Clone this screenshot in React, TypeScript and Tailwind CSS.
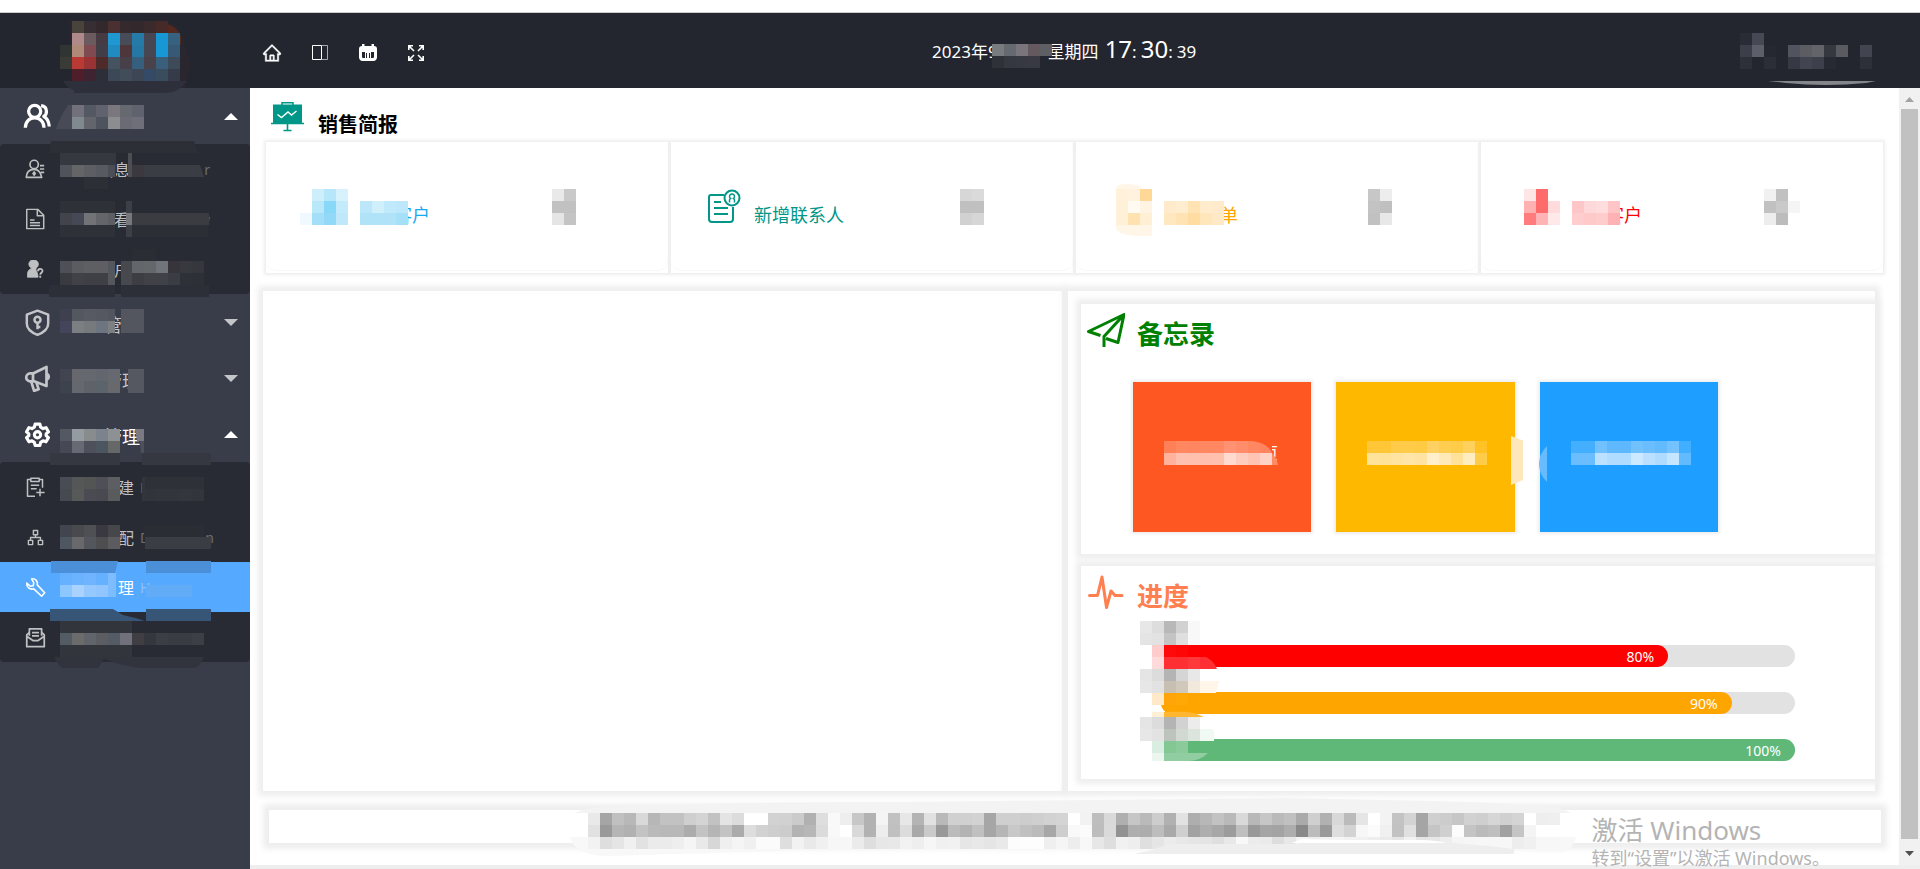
import type { ReactNode } from 'react'
import { AiOutlineHome } from 'react-icons/ai'

const CELL = 12

// two digit tokens are greys, six digit tokens are full colours, "." is empty
function Patch({ x = 0, y = 0, rows }: { x?: number; y?: number; rows: string[] }) {
  return (
    <g shapeRendering="crispEdges">
      {rows.flatMap((row, r) =>
        row.split(' ').map((c, i) =>
          c === '.' ? null : (
            <rect
              key={`${r}-${i}`}
              x={x + i * CELL}
              y={y + r * CELL}
              width={CELL}
              height={CELL}
              fill={`#${c.length === 2 ? c + c + c : c}`}
            />
          )
        )
      )}
    </g>
  )
}

function Mosaic({ rows, className = '', children }: { rows: string[]; className?: string; children?: ReactNode }) {
  const width = Math.max(...rows.map((r) => r.split(' ').length)) * CELL
  return (
    <svg width={width} height={rows.length * CELL} className={`block shrink-0 overflow-visible ${className}`} aria-hidden="true">
      <Patch rows={rows} />
      {children}
    </svg>
  )
}

interface IconProps {
  size: number
  width?: number
  children: ReactNode
}

function Icon({ size, width = 2, children }: IconProps) {
  return (
    <svg
      width={size}
      height={size}
      viewBox="0 0 24 24"
      fill="none"
      stroke="currentColor"
      strokeWidth={width}
      strokeLinejoin="round"
      className="shrink-0"
      aria-hidden="true"
    >
      {children}
    </svg>
  )
}

const icons = {
  users: (
    <Icon size={28} width={2.8}>
      <circle cx="10" cy="8" r="5.2" />
      <path d="M2 22c0-5 3.4-8.4 8-8.4s8 3.4 8 8.4" />
      <path d="M15.5 3.2c3 .4 4.6 2.4 4.6 4.9 0 1.9-.9 3.4-2.3 4.3 2.8 1.4 4.4 4.4 4.7 8.6" />
    </Icon>
  ),
  shield: (
    <Icon size={27} width={2.2}>
      <path d="M12 1.5 21.500 5v8c0 4.500-4 7.700-9.500 10C6.500 20.700 2.500 17.500 2.500 13V5z" />
      <circle cx="12" cy="9.5" r="2.7" />
      <path d="M12 12v6M12 16h2.5" />
    </Icon>
  ),
  horn: (
    <Icon size={27} width={2.4}>
      <path d="M8 7.5 20 1.700v17L9 14.500H5.500a3.500 3.500 0 0 1 0-7z" />
      <path d="M20.500 8c2 1 2 4 0 5M6.500 15l2.500 8 4-1.500-2-6M8 8v6" />
    </Icon>
  ),
  gear: (
    <Icon size={25} width={3}>
      <path d="M9.700 2h4.600l.7 3 2.300 1.300 2.900-.9 2.300 4L20.300 11.500v1.500l2.200 2-2.300 4-2.900-.9L15 19.500l-.7 3H9.700l-.7-3-2.300-1.400-2.900.9-2.300-4L3.700 13v-1.500L1.500 9.400l2.300-4 2.900.9L9 5z" />
      <circle cx="12" cy="12.2" r="3" />
    </Icon>
  ),
  person: (
    <Icon size={20} width={2}>
      <circle cx="11" cy="6.5" r="5" />
      <path d="M1.500 22c.3-6.500 4-9.500 9.500-9.500 4.500 0 7.700 2.500 9 9.500zM18 8h5M18 12h5M19 16h4" />
      <path d="m11 14 2.500 3.500L11 21l-2.500-3.500z" fill="currentColor" stroke="none" />
    </Icon>
  ),
  file: (
    <Icon size={22} width={1.6}>
      <path d="M3 1.500h12L21.500 8v14.500H3zM14.500 1.500v7h7M6.500 13h5M6.500 16h11M6.500 19h11" />
    </Icon>
  ),
  ask: (
    <Icon size={18} width={1}>
      <path
        d="M11 0a5.500 5.500 0 0 1 5.500 5.500c0 2-1 3.800-2.500 4.800-1 1.200-1 3 .5 5.200L16 21v2H2v-5c0-3 2-5.500 6-7A5.500 5.500 0 0 1 11 0z"
        fill="currentColor"
      />
      <path d="M16 15c0-4 6-4 6-.5 0 2.500-3 2.500-3 5M19 21v2.500" strokeWidth="2.4" />
    </Icon>
  ),
  clip: (
    <Icon size={20} width={1.8}>
      <path d="M12 23H3V3h4M17 3h4v10M7 1.500h10v4H7zM7 10h10M7 14h7M18 14v9M13.500 18.500h10" />
    </Icon>
  ),
  tree: (
    <Icon size={17} width={2}>
      <path d="M9 2h6v6H9zM2 16h6v6H2zM16 16h6v6h-6zM12 8v4M5 16v-4h14v4" />
    </Icon>
  ),
  wrench: (
    <Icon size={21} width={1.8}>
      <path d="M7.500 2.200c4-1 7.500 2.500 6.500 6.800l8.500 9-3.500 4-9-8.500C5.500 15 1.500 11.500 2 7l4 3.500 3.500-.5.500-3.500z" />
    </Icon>
  ),
  mail: (
    <Icon size={21} width={2}>
      <path d="M5 10V2h14v8M5 6 2 9v13.500h20V9l-3-3M2 10.500l7 5h6l7-5M8 6.500h8M8 10h8" />
    </Icon>
  ),
}

interface Sub {
  icon: ReactNode
  label: string
  indent: string
  head?: string
  tail?: string
  active?: boolean
}

interface Group {
  icon: ReactNode
  label: string
  items?: Sub[]
}

const menu: Group[] = [
  {
    icon: icons.users,
    label: '',
    items: [
      { icon: icons.person, label: '信息', indent: 'ml-[52px]', tail: 'r' },
      { icon: icons.file, label: '查看', indent: 'ml-[52px]', tail: 'w' },
      { icon: icons.ask, label: '客户', indent: 'ml-[52px]' },
    ],
  },
  { icon: icons.shield, label: '管理' },
  { icon: icons.horn, label: '管理' },
  {
    icon: icons.gear,
    label: '管理',
    items: [
      { icon: icons.clip, label: '建', indent: 'ml-[72px]', head: 'N' },
      { icon: icons.tree, label: '配', indent: 'ml-[72px]', head: 'D', tail: 'n' },
      { icon: icons.wrench, label: '理', indent: 'ml-[72px]', head: 'H', active: true },
      { icon: icons.mail, label: '', indent: 'ml-[72px]' },
    ],
  },
]

function Sidebar() {
  return (
    <nav className="w-[250px] shrink-0 bg-[#393d49]">
      {menu.map((group, i) => (
        <div key={i}>
          <button
            type="button"
            aria-label={group.label || '菜单'}
            aria-expanded={!!group.items}
            className={`flex h-14 w-full items-center pl-[23px] pr-3 text-lg ${group.items ? 'text-white' : 'text-[#c4c5c9]'}`}
          >
            <span className="flex w-7 justify-center">{group.icon}</span>
            <span className="ml-[53px] flex-1 pt-1.5 text-left">{group.label}</span>
            <svg width="14" height="7" viewBox="0 0 14 7" fill="currentColor" aria-hidden="true">
              <path d={group.items ? 'M0 7 7 0l7 7z' : 'M0 0h14L7 7z'} />
            </svg>
          </button>
          {group.items && (
            <ul className="rounded-sm bg-[#282b33]">
              {group.items.map((item, k) => (
                <li key={k}>
                  <a
                    href="#"
                    aria-label={item.label || '邮件'}
                    className={`flex h-[50px] items-center pl-6 text-base ${
                      item.active ? 'bg-[#55aaff] text-white' : 'text-[#bfc0c2]'
                    }`}
                  >
                    <span className="flex w-[22px] justify-center">{item.icon}</span>
                    <span className={`pt-0.5 ${item.indent}`}>{item.label}</span>
                    <span className={`ml-1.5 flex w-[74px] justify-between pt-0.5 text-sm ${item.active ? 'text-[#8fc2f5]' : 'text-[#6b6d73]'}`}>
                      <span>{item.head}</span>
                      <span>{item.tail}</span>
                    </span>
                  </a>
                </li>
              ))}
            </ul>
          )}
        </div>
      ))}
    </nav>
  )
}

// pixelated areas over the logo and the menu labels
function MenuMask() {
  return (
    <svg className="pointer-events-none absolute left-0 top-0" width="250" height="680" aria-hidden="true">
      <path d="M69 20q8 0 16 4l85 0q8-1 11 10l10 30-6 24H72z" fill="#2a2630" />
      <path d="M160 24q14-2 21 12v9l-13-12z" fill="#52281f" />
      <Patch
        x={60}
        y={21}
        rows={[
          '. 48443c 372e33 33292d 4a3030 35292d 33292d 3a2a2c 452a28',
          '. b08a8b 6b5b5e 463b43 1f97d0 484c58 257aa8 464753 1797d3 37627f',
          '2f3533 b08a78 7f4b50 423e47 1f8bc0 4f363b 2678a4 464753 1797d3 365a75',
          '3a3a36 b93a32 9a3333 4f2a2a 455260 484048 355f7c 4a424a 3a5f7a 3d4a58',
          '. 4e1f2a 3e2430 2c2e38 3d4857 414d59 3d4654 354a66 3a4d5e 353b49',
        ]}
      />
      <path d="M63 81h124q-8 12-22 12H73l2-2q-8-3-12-10z" fill="#2d2f3a" />

      <path d="M56 129q4-12 12-24h4v24z" fill="#484b55" />
      <Patch x={72} y={105} rows={['72717b 545863 60636e 7b777e 666970 5f636d', '80898f 62656b 4e545e 8b8d8f 6b6b76 6f6f79']} />

      <path d="M51 141h143l4 12H49z" fill="#2d2f37" />
      <path d="M60 153h56v24H60z" fill="#36383f" />
      <path d="M84 177h24v12H84z" fill="#2d2f37" />
      <path d="M128 153h4v24h-4z" fill="#4c4e54" />
      <Patch x={60} y={165} rows={['50535a 646567 5c5e63 585a62']} />
      <path d="M108 165h7v12h-7z" fill="#4c4e57" />
      <path d="M132 165h68l4 12h-72z" fill="#3b3d44" />
      <path d="M132 165h12v12h-12z" fill="#3b393e" />

      <path d="M60 201h55v36H60z" fill="#2f3138" />
      <Patch x={60} y={213} rows={['43434c 444955 727377 646568']} />
      <path d="M108 213h7v12h-7z" fill="#5c5e63" />
      <path d="M126 201h6v36h-6z" fill="#3d3f46" />
      <path d="M126 213h6v12h-6z" fill="#77787c" />
      <path d="M132 213h77v12h-77z" fill="#3a3c42" />
      <path d="M132 225h76v12h-76z" fill="#2c2e36" />

      <path d="M132 249h24v12h-24z" fill="#2b2d35" />
      <Patch x={60} y={261} rows={['4e4f57 5b5c60 5d5f62 5f5e63', '393b41 404248 3e4046 3f4046']} />
      <path d="M108 261h7v24h-7z" fill="#55575f" />
      <path d="M121 261h11v24h-11z" fill="#47494f" />
      <Patch x={132} y={261} rows={['64676a 65686b 72747b 37343a 37393f 35373d', '3c3e44 404248 404248 3b3d44 2f3138 2d3037']} />
      <path d="M49 285h66v12H49zM121 285h88v12h-88z" fill="#2d2f38" />

      <Patch x={60} y={309} rows={['3e404f 53575f 575a62 555861', '43465a 7c7f82 767a7c 6d7580']} />
      <path d="M108 309h7v12h-7z" fill="#505560" />
      <path d="M108 321h7v12h-7z" fill="#7d8082" />
      <path d="M121 309h23v24h-23z" fill="#54565f" />
      <Patch x={60} y={369} rows={['42454f 66686e 65686f 62676f 66696f', '3c434c 66686f 606269 5c646b 67696c']} />
      <path d="M128 369h16v24h-16z" fill="#565861" />
      <Patch x={60} y={429} rows={['545862 949ba1 888c8c 7d838d 8e9193', '464954 676a73 4e515c 4c5661 666767']} />
      <path d="M135 429h9v12h-7z" fill="#7b7982" />
      <path d="M140 441h4v12h-3z" fill="#4e505a" />
      <path d="M50 453h70v12H50zM142 453h69v12h-69z" fill="#353841" />

      <Patch x={60} y={477} rows={['484d53 545657 535555 4f4f57 5d5e61', '464a50 575858 4a4b53 484951 5a5b5d']} />
      <Patch x={144} y={477} rows={['2f3138 2f3138 2f3138 2f3138 2f3138', '32343b 33353c 33353c 34363d 33353c']} />
      <path d="M142 477h3v24h-3z" fill="#33353c" />
      <Patch x={60} y={525} rows={['42454d 484a4d 4e5053 3a3942 45474b', '4e5761 69696b 54565d 4e4e51 5b5c5f']} />
      <path d="M144 525h60v12h-60z" fill="#2b2d34" />
      <path d="M145 537h66v12h-66z" fill="#3b3d44" />

      <path d="M51 561h67l-3 12H51zM146 561h65v12h-65z" fill="#4b8fd8" />
      <Patch x={60} y={573} rows={['65b1ff 6bb3ff 70b4ff 65b0ff', '8dc7ff a9d2ff 95c8ff 90c5ff']} />
      <path d="M108 573h8v24h-8z" fill="#7dbcff" />
      <path d="M146 585h46v12h-46z" fill="#62abf6" />
      <path d="M50 609h63l10 6q10 2 22 6H50zM146 609h65v12h-65z" fill="#365577" />

      <path d="M60 621h72v36H60z" fill="#33353c" />
      <Patch x={60} y={633} rows={['535b64 6b6b6c 62646c 5c5d62 545b64 71717b 413e43 35373f 3c3e46 3a3c44 3a3c43 3d3f47']} />
      <path d="M54 657h150q-4 10-10 11h-52q-20-2-38-9l-6 9H62q-5-4-8-11z" fill="#31333d" />
    </svg>
  )
}

function Header() {
  return (
    <header className="flex h-[75px] shrink-0 items-center justify-between bg-[#23262e] pl-[260px] pr-12 text-white">
      <div className="flex flex-1 items-center gap-6 pt-1">
        <button type="button" aria-label="首页" className="flex size-6 items-center justify-center">
          <AiOutlineHome size={20} strokeWidth={24} />
        </button>
        <button type="button" aria-label="侧栏" className="flex size-6 items-center justify-center">
          <svg width="16" height="16" viewBox="0 0 16 16" fill="none" stroke="currentColor" aria-hidden="true">
            <path d="M.5.5h9v14h-9z" />
            <path d="M10 .5h5.500v14H10" strokeOpacity=".6" />
          </svg>
        </button>
        <button type="button" aria-label="日历" className="flex size-6 items-center justify-center">
          <svg width="18" height="17" viewBox="0 0 18 17" aria-hidden="true">
            <path d="M3 0h2.500v2h7V0H15v2q3 0 3 3v8q0 3-3 4H3q-3-1-3-4V5q0-3 3-3z" fill="currentColor" />
            <path d="M3 8h3v6H4q-1 0-1-1zM12 8h3v5q0 1-1 1h-2z" fill="#23262e" />
            <path d="M7 9h1v5H7zM10 9h1v5h-1z" fill="#23262e" />
          </svg>
        </button>
        <button type="button" aria-label="全屏" className="flex size-6 items-center justify-center">
          <svg width="16" height="16" viewBox="0 0 16 16" fill="none" stroke="currentColor" strokeWidth="1.6" aria-hidden="true">
            <path d="M.8 5V.8H5M11 .8h4.200V5M15.200 11v4.200H11M5 15.200H.8V11M1 1l5 5M15 1l-5 5M15 15l-5-5M1 15l5-5" />
          </svg>
        </button>
      </div>

      <div className="flex w-[268px] items-baseline whitespace-nowrap text-[17px] leading-7">
        <span>2023年9</span>
        <span className="relative ml-[50px]">
          星期四
          <Mosaic
            rows={['797c7e 656a70 7a757d 64595f 5e5f65', '2f3139 353840 373942 383942']}
            className="absolute -left-14 top-1.5"
          />
        </span>
        <span className="ml-1.5 text-2xl leading-7">17</span>
        <span className="mr-1">:</span>
        <span className="text-2xl leading-7">30</span>
        <span className="mr-1">:</span>
        <span>39</span>
      </div>

      <div className="flex flex-1 justify-end">
        <Mosaic
          rows={[
            '292c35 464953 . . . . . . . . .',
            '3c3f49 5c5f69 252831 . 51545e 5c5d63 63646a 35383f 5a5b61 . 42454f',
            '2d3039 24262f 2b2e37 . 363943 42454f 3d404a 272a33 . . 2d3039',
          ]}
        >
          <path d="M28 48h108l-10 2q-20 2-40 2t-40-2z" fill="#85868b" />
        </Mosaic>
      </div>
    </header>
  )
}

const cards = [
  {
    pad: 'pl-[34px] pr-[92px]',
    color: 'text-[#1aa9f0]',
    icon: <Mosaic rows={['. cdeefb b5e6f9 d8f2fd', '. b8e8fa 89d8f7 c3ebfb', 'eff9ff a4dff9 92d9f7 bfe9fb']} />,
    mask: ['bce7fa cfeffb c0e9fb bfe7fb', 'b0e3f8 b0e3f8 b0e3f8 a6dff8'],
    overlap: '-ml-3.5',
    text: '客户',
    count: ['e9 c9', 'c1 c1', 'e5 c4'],
  },
  {
    pad: 'pl-[37px] pr-[89px]',
    color: 'text-[#009688]',
    icon: (
      <svg width="34" height="36" viewBox="0 0 34 36" fill="none" stroke="currentColor" strokeWidth="2" aria-hidden="true">
        <path d="M16 6H3q-2 0-2 2v22q0 3 3 3h18q3 0 3-3V18M6 13h7M6 19h14M6 25h14" />
        <circle cx="24" cy="9" r="7.5" />
        <path d="M21.500 13.500V11q0-1 1-1.500a2.500 2.500 0 1 1 3 0q1 .5 1 1.500v2.500" strokeWidth="1.5" />
      </svg>
    ),
    text: '新增联系人',
    count: ['d7 da', 'c0 c0', 'd1 d6'],
  },
  {
    pad: 'pl-10 pr-[86px]',
    color: 'text-[#ffa500]',
    icon: (
      <Mosaic rows={['fff1da fff3e0 ffd898', 'fff0d8 fffaf2 fff4e4', 'fff0d8 ffe2b0 ffefd3']}>
        <path d="M0 0q0-5 10-5 14 0 16 5zM0 36h36v11H24Q8 47 0 41z" fill="#fff6e8" />
      </Mosaic>
    ),
    mask: ['ffebcb ffedd0 ffe3b3 ffeccd ffebcb', 'ffe8c0 ffe3b3 ffdda2 ffe6bb ffe9c6'],
    overlap: '-ml-1',
    text: '单',
    count: ['c7 ed', 'c3 c0', 'c1 e8'],
  },
  {
    pad: 'pl-[43px] pr-[83px]',
    color: 'text-[#ff0000]',
    icon: <Mosaic rows={['ffe6e6 ff6a6b .', 'ffb1b2 ff6a6b ffdbdc', 'ff7b7c ffb3b4 ffe8e8']} />,
    mask: ['ffc6c8 ffd8da ffdcde ffc4c6', 'ffcdce ffc8c9 ffcccd ffb2b3'],
    overlap: '-ml-3.5',
    text: '客户',
    count: ['f1 c1 .', 'c1 c9 f5', 'ed bc .'],
  },
]

function Briefing() {
  return (
    <section className="px-4">
      <div className="flex h-[54px] items-start gap-3.5 pl-[5px] pt-3.5">
        <svg width="33" height="30" viewBox="0 0 33 30" fill="none" stroke="#009688" className="shrink-0" aria-hidden="true">
          <path d="M2 2.500h29V21H2z" fill="#009688" stroke="none" />
          <path d="M11 3V.8h11V3" strokeWidth="1.5" />
          <path d="M0 21.500h33M16.500 22v6M12.500 28.500h8" strokeWidth="1.6" />
          <path d="m6.500 12.500 4 3 6.500-5.500 3.500 3 5-4" stroke="#fff" strokeWidth="1.4" />
        </svg>
        <h2 className="text-xl font-bold leading-[46px] text-black">销售简报</h2>
      </div>
      <div className="grid grid-cols-4 gap-[3px]">
        {cards.map((card, i) => (
          <div key={i} className="bg-white pb-[3px] shadow-[0_0_3px_2px_#eee]">
            <div className={`flex h-32 items-center justify-between rounded-[10px] pt-px shadow-[0_1px_1px_#f7f7f7] ${card.pad}`}>
              <div className={`flex items-end gap-3 ${card.color}`}>
                {card.icon}
                <div className="flex items-end">
                  {card.mask && <Mosaic rows={card.mask} className="relative z-10" />}
                  <span className={`text-lg leading-5 ${card.overlap ?? ''}`}>{card.text}</span>
                </div>
              </div>
              <Mosaic rows={card.count} />
            </div>
          </div>
        ))}
      </div>
    </section>
  )
}

const memos = [
  {
    color: 'bg-[#ff5722]',
    rows: [
      'ff7f57 ff8860 ff8660 ff8862 ff8862 ff9272 ff8c6a ff8862 ff8560',
      'ffb39c ffc1af ffc0ad ffbfac ffc0ae ffdace ffcdbf ffc4b3 ffd2c5',
    ],
  },
  {
    color: 'bg-[#ffb800]',
    rows: [
      'ffc637 ffc637 ffcb48 ffcb48 ffca44 ffd163 ffcd50 ffcc4a ffd05c ffc224',
      'ffe39a ffe29a ffe3a0 ffe5a8 ffe3a3 fff0cb ffe9b6 ffe19a ffedc2 ffcc4a',
    ],
  },
  {
    color: 'bg-[#1e9fff]',
    rows: [
      '45afff 45afff 72c1ff 60b9ff 5db8ff 72c1ff 6abdff 62baff 74c2ff 42aeff',
      '6abeff 6abeff bce1ff b0dcff aedbff cde9ff bbe0ff aedbff c6e5ff 62baff',
    ],
  },
]

const progress = [
  { value: 80, color: 'bg-[#ff0000]' },
  { value: 90, color: 'bg-[#ffa500]' },
  { value: 100, color: 'bg-[#5fb878]' },
]

function Memo() {
  return (
    <section className="h-[250px] bg-white shadow-[0_0_6px_5px_#eee]">
      <div className="flex items-start gap-3 pl-1.5 pt-[9px] text-[#008000]">
        <svg width="38" height="35" viewBox="0 0 38 35" fill="none" stroke="currentColor" strokeWidth="3" strokeLinejoin="round" className="shrink-0" aria-hidden="true">
          <path d="M13.500 22.500 1.500 18.500 37 1.500 31 29.500 19 25.500M37 1.500 17 23.500V34" />
        </svg>
        <h2 className="text-[26px] font-bold leading-[42px]">备忘录</h2>
      </div>
      <div className="ml-[52px] mr-[157px] mt-[27px] grid grid-cols-3 gap-[25px]">
        {memos.map((memo, i) => (
          <button
            key={i}
            type="button"
            aria-label={`备忘 ${i + 1}`}
            className={`relative flex h-[150px] items-center pb-2 pl-[31px] text-base text-white shadow-[0_0_3px_2px_#eee] ${memo.color}`}
          >
            <Mosaic rows={memo.rows} className="relative z-10">
              {i === 0 && <path d="M88 0h20v12Q104 2 88 0z" fill="#ff5722" />}
              {i === 0 && <path d="M108 12q5 6 6 12h-6z" fill="#ff8a66" />}
              {i === 1 && <path d="M144-5l12 4.500V39l-12 5z" fill="#fee8bb" />}
              {i === 2 && <path d="M-24 5v36q-8-8-8-18t8-18z" fill="#66bcff" />}
            </Mosaic>
            {i === 0 && <span className="-ml-2.5">页</span>}
          </button>
        ))}
      </div>
    </section>
  )
}

function Progress() {
  return (
    <section className="mt-3 h-[213px] bg-white shadow-[0_0_6px_5px_#eee]">
      <div className="flex items-start gap-3 pl-1.5 pt-[9px] text-[#ff7f50]">
        <svg width="38" height="35" viewBox="0 0 38 35" fill="none" stroke="currentColor" strokeWidth="3" strokeLinejoin="round" strokeLinecap="round" className="shrink-0" aria-hidden="true">
          <path d="M2.500 20.500h8L15 2l4.500 30.500L24 16l4 4.500h7" />
        </svg>
        <h2 className="text-[26px] font-bold leading-[42px]">进度</h2>
      </div>
      <div className="relative ml-20 mr-20 mt-7 flex flex-col gap-[25px]">
        {progress.map((p) => (
          <div key={p.value} role="progressbar" aria-label="进度" aria-valuenow={p.value} className="h-[22px] rounded-full bg-[#e2e2e2]">
            <div
              className={`h-full rounded-full pr-3.5 text-right text-sm leading-[23px] text-white ${p.color}`}
              style={{ width: `${p.value}%` }}
            >
              {p.value}%
            </div>
          </div>
        ))}
        <Mosaic
          className="absolute -left-[21px] -top-6"
          rows={[
            'e7 dd b8 d1 f8',
            'e4 e2 c4 df f8',
            '. ffcccc ff0a0a ff0606',
            '. ffdada ff3033 ff3033 ff383b',
            'e5 dc b4 d5 e8',
            'e7 e2 c8bfb3 d0c8bb f2e9dc',
            '. ffe9c8 ffa50a ffa806',
            '.',
            'e5 dc b4 d2 ec',
            'e7 e3 bcc4bd d2d9d3 dce5dd',
            '. d9eee0 83c795 8bcb9b',
          ]}
        >
          <path d="M60 36h6q8 4 11 12H60z" fill="#ff3033" />
          <path d="M60 60h19l-3 12H60z" fill="#fff6e9" />
          <path d="M24 91q20-1 30 1l10 4H24z" fill="#ffb633" />
          <path d="M12 91h12v5H12z" fill="#ffefd5" />
          <path d="M60 108h13q2 6 1 12H60z" fill="#f0f9f2" />
          <path d="M12 132h12v8H12z" fill="#ecf6ef" />
          <path d="M24 132h44q-8 8-20 8H24z" fill="#90cda0" />
        </Mosaic>
      </div>
    </section>
  )
}

const copyright = [
  'e9 a5 c0 b8 d9 b7 c2 c2 cf d4 c2 e4 dc ff ff d2 d1 cb b1 de f9 ee c7 b2 f4 c1 e7 b4 e1 b9 d0 d0 d2 a6 cf cf cd cf d2 d4 ff f2 be d9 af c6 ba cd b1 e2 ae b7 c2 b9 d9 b8 c6 ba c0 aa cf b1 d8 bb e5 ff f3 c3 d3 a5 cf cc c6 d1 cf d6 d0 d4 ff ee ef',
  'e1 99 b5 b1 c3 ba b8 b8 ac c3 b5 c3 ab dd d2 ce cc b3 b7 db f9 ff d9 b2 ed c0 dc a9 ca 99 bb b3 c0 a6 b6 c8 c0 bb a7 ce f9 fb bd da 92 ae ad bd a9 cf a2 ae a7 9c bf 99 a5 a3 ad 89 bc 9a de d3 f7 fb f0 c2 e0 a5 c5 d0 fc c4 bb bf a1 c5 f4 ff ff',
  'f2 de e5 f0 e2 eb eb ee f5 e9 d7 ef f5 f0 fb fb de f2 e9 f0 f7 f7 eb de e7 e8 f2 ee f6 f0 f1 e6 e8 e5 e9 fc fd fd ef f5 ed f8 e7 de f1 ee df e5 ec e8 e5 e4 df e8 f8 ec ea dd e8 f4 ee f2 f4 f2 f1 ee ea e5 f1 e5 e8 ee f5 f6 f7 f7 f7 ed f0 f7 f7',
]

function Footer() {
  return (
    <footer className="relative ml-[19px] mr-[18px] mt-[19px] h-[33px] bg-white shadow-[0_0_6px_6px_#eee]">
      <svg
        className="absolute -top-5 left-1/2 -translate-x-1/2"
        width="1012"
        height="70"
        viewBox="569 790 1012 70"
        aria-hidden="true"
      >
        <path d="M575 813q10-5 30-6 100-5 300-5l380-4 150 3q100 3 120 6 10 3 16 6z" fill="#f3f3f3" />
        <path d="M569 837h1007q-2 12-14 15l-30-1q-40-1-85-8l-90-4-60 9-520 3-170 5q-30 0-38-19z" fill="#f8f8f8" />
        <Patch x={588} y={813} rows={copyright} />
        <path d="M1152 850l16-6h130l15-4h112l28 3 36 3 25 3v5h-380z" fill="#eee" />
        <path d="M1292 843l10-4 42 1h80q15 1 22 3z" fill="#fff" />
      </svg>
    </footer>
  )
}

function Scrollbar() {
  return (
    <div className="flex w-[21px] shrink-0 flex-col items-center bg-[#f1f1f1]">
      <svg width="9" height="21" viewBox="0 0 9 21" fill="#a3a3a3" aria-hidden="true">
        <path d="M0 14 4.500 9 9 14z" />
      </svg>
      <div className="w-[17px] flex-1 bg-[#c1c1c1]" />
      <svg width="9" height="26" viewBox="0 0 9 26" fill="#505050" aria-hidden="true">
        <path d="M0 12h9l-4.500 5z" />
      </svg>
    </div>
  )
}

export default function App() {
  return (
    <div className="relative flex min-h-screen flex-col bg-white font-['Noto_Sans','Noto_Sans_CJK_SC',sans-serif]">
      <div className="h-[13px] shrink-0 border-b border-[#ccc]" />
      <Header />
      <div className="flex flex-1">
        <Sidebar />
        <div className="flex flex-1 flex-col border-b-4 border-[#eee]">
          <div className="flex flex-1">
            <main className="min-w-0 flex-1 overflow-hidden">
              <Briefing />
              <div className="ml-[13px] mr-6 mt-[18px] grid grid-cols-[799fr_807fr] gap-1.5">
                <section className="bg-white shadow-[0_0_6px_5px_#eee]" />
                <div className="bg-white pb-3 pl-[13px] pt-[13px] shadow-[0_0_6px_5px_#eee]">
                  <Memo />
                  <Progress />
                </div>
              </div>
              <Footer />
            </main>
            <Scrollbar />
          </div>
        </div>
      </div>
      <MenuMask />
      <div className="pointer-events-none absolute bottom-0 right-[90px] whitespace-nowrap text-[#b4b4b4]">
        <p className="text-[26px] leading-[34px]">激活 Windows</p>
        <p className="text-lg leading-[22px]">转到“设置”以激活 Windows。</p>
      </div>
    </div>
  )
}
